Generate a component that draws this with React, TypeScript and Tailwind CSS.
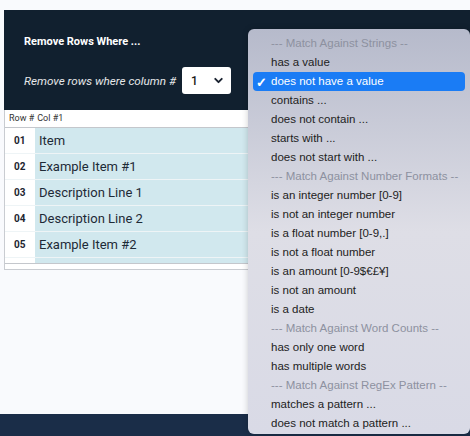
import { ChevronDown } from "lucide-react"

type Opt = { label: string; header?: boolean; selected?: boolean }

const options: Opt[] = [
  { label: "--- Match Against Strings --", header: true },
  { label: "has a value" },
  { label: "does not have a value", selected: true },
  { label: "contains ..." },
  { label: "does not contain ..." },
  { label: "starts with ..." },
  { label: "does not start with ..." },
  { label: "--- Match Against Number Formats --", header: true },
  { label: "is an integer number [0-9]" },
  { label: "is not an integer number" },
  { label: "is a float number [0-9,.]" },
  { label: "is not a float number" },
  { label: "is an amount [0-9$€£¥]" },
  { label: "is not an amount" },
  { label: "is a date" },
  { label: "--- Match Against Word Counts --", header: true },
  { label: "has only one word" },
  { label: "has multiple words" },
  { label: "--- Match Against RegEx Pattern --", header: true },
  { label: "matches a pattern ..." },
  { label: "does not match a pattern ..." },
]

const rows = [
  ["01", "Item"],
  ["02", "Example Item #1"],
  ["03", "Description Line 1"],
  ["04", "Description Line 2"],
  ["05", "Example Item #2"],
  ["", ""],
]

const App = () => {
  return (
    <div className="relative w-[470px] h-[436px] overflow-hidden bg-[#f9fafd] flex flex-col font-['Roboto',sans-serif]">
      <section className="mt-[10px] ml-[4px] h-[100px] bg-[#11202f] flex flex-col pl-[20px]">
        <h2 className="mt-[25px] text-white text-[11px] font-bold leading-[13px]">Remove Rows Where ...</h2>
        <div className="mt-[19px] flex items-center gap-[6px]">
          <span className="text-white/90 italic text-[11.7px] leading-[16px]">Remove rows where column #</span>
          <div className="w-[49px] h-[27px] bg-white rounded-[3px] flex items-center justify-between pl-[9px] pr-[6px] text-[12px] font-medium text-[#1a1a1a]">
            <span>1</span>
            <ChevronDown size={13} strokeWidth={3.5} className="text-[#1a2230]" />
          </div>
        </div>
      </section>

      <div className="ml-[4px] border-l border-b border-[#c9ccd1] bg-white">
        <div className="h-[18px] flex items-center pl-[4px] text-[9px] text-[#333] border-b border-[#c4c7cc] gap-[3px]">
          <span>Row #</span>
          <span>Col #1</span>
        </div>
        <div className="h-[136px] overflow-hidden border-b border-[#c4c7cc]">
          {rows.map(([n, t], i) => (
            <div key={i} className="flex h-[26px] border-b border-[#eef4f6]">
              <div className="w-[30px] shrink-0 bg-white flex items-center pl-[9px] text-[10px] font-bold text-[#1d2530]">{n}</div>
              <div className="flex-1 bg-[#d1e8ee] flex items-center pl-[4px] text-[13px] text-[#1e2a36]">{t}</div>
            </div>
          ))}
        </div>
        <div className="h-[5px]" />
      </div>

      <div className="flex-1" />
      <footer className="h-[22px] bg-[#1a2d48]" />

      <div className="absolute left-[248px] top-[29px] w-[222px] h-[405px] rounded-[6px] shadow-[0_0_6px_rgba(0,0,0,0.2)] bg-gradient-to-b from-[#b6bacb] via-[#dedee6] to-[#d9dae6] py-[5px] px-[5px] font-['Liberation_Sans',sans-serif]">
        {options.map((o) => (
          <div
            key={o.label}
            className={`relative h-[19px] flex items-center pl-[18px] text-[11.5px] rounded-[4px] ${
              o.selected ? "bg-[#1a7cf5] text-white" : o.header ? "text-[#8d91a0]" : "text-[#222]"
            }`}
          >
            {o.selected && <span className="absolute left-[3px] top-[1px] text-[13px] font-bold">✓</span>}
            {o.label}
          </div>
        ))}
      </div>
    </div>
  )
}

export default App
